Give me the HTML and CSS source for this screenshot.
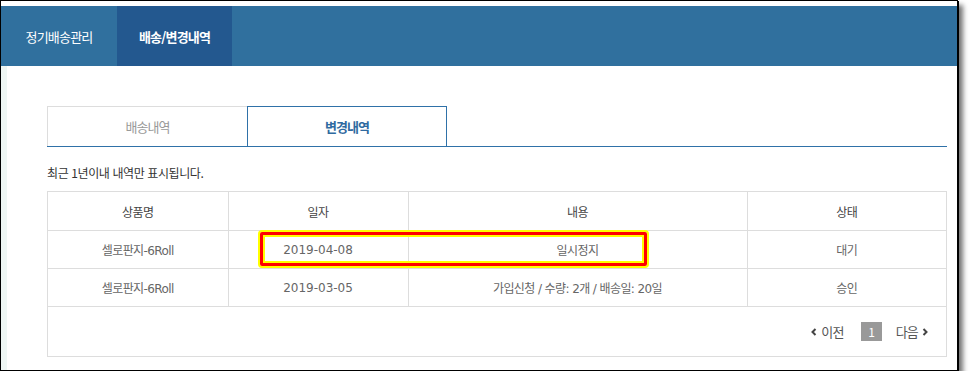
FILE: index.html
```html
<!DOCTYPE html>
<html lang="ko">

<head>
  <meta charset="UTF-8">
  <meta name="viewport" content="width=device-width, initial-scale=1.0">
  <title>배송/변경내역</title>
  <link rel="stylesheet" href="styles.css">
</head>

<body>
  <div class="frame">
    <nav class="gnb">
      <a class="gnb-item" href="#">정기배송관리</a>
      <a class="gnb-item on" href="#">배송/변경내역</a>
    </nav>

    <div class="container">
      <ul class="tabs">
        <li class="tab"><a href="#">배송내역</a></li>
        <li class="tab on"><a href="#">변경내역</a></li>
      </ul>

      <p class="notice">최근 1년이내 내역만 표시됩니다.</p>

      <div class="table-wrap">
        <table class="history">
          <colgroup>
            <col style="width: 180px">
            <col style="width: 180px">
            <col style="width: 339px">
            <col>
          </colgroup>
          <thead>
            <tr>
              <th>상품명</th>
              <th>일자</th>
              <th>내용</th>
              <th>상태</th>
            </tr>
          </thead>
          <tbody>
            <tr>
              <td>셀로판지-6Roll</td>
              <td class="date">2019-04-08</td>
              <td>일시정지</td>
              <td>대기</td>
            </tr>
            <tr>
              <td>셀로판지-6Roll</td>
              <td class="date">2019-03-05</td>
              <td>가입신청 / 수량: 2개 / 배송일: 20일</td>
              <td>승인</td>
            </tr>
          </tbody>
        </table>

        <div class="pager">
          <a class="prev" href="#">
            <svg width="6" height="8" viewBox="0 0 6 8"><polyline points="4.5,1 1.5,4 4.5,7" /></svg>
            이전
          </a>
          <span class="num">1</span>
          <a class="next" href="#">
            다음
            <svg width="6" height="8" viewBox="0 0 6 8"><polyline points="1.5,1 4.5,4 1.5,7" /></svg>
          </a>
        </div>

        <!-- annotation box drawn over the first row -->
        <div class="mark"></div>
      </div>
    </div>
  </div>
</body>

</html>
```

FILE: styles.css
```css
* {
  box-sizing: border-box;
}

body {
  margin: 0;
  background: #fff;
  font-family: "Noto Sans CJK KR", "Noto Sans", sans-serif;
  font-size: 12px;
  color: #555;
}

a {
  text-decoration: none;
  color: inherit;
}

.frame {
  width: 958px;
  height: 371px;
  border: 1px solid #000;
  padding-top: 5px;
  background: #fff;
  box-shadow: 1px 1px 0 #000, 5px 5px 5px rgba(0, 0, 0, 0.55);
}

.gnb {
  display: flex;
  height: 60px;
  background: #30709e;
}

.gnb-item {
  width: 116px;
  display: flex;
  align-items: center;
  justify-content: center;
  color: #fff;
  font-size: 13px;
  letter-spacing: -0.8px;
}

.gnb-item.on {
  width: 115px;
  background: #23588f;
  font-weight: bold;
}

.container {
  height: 304px;
  border-left: 6px solid #eef6f4;
  padding: 40px 10px 0 40px;
}

.tabs {
  display: flex;
  margin: 0;
  padding: 0;
  list-style: none;
  border-bottom: 1px solid #2f71a8;
}

.tab {
  width: 200px;
  height: 40px;
  border: 1px solid #ddd;
  border-bottom: 0;
  border-right: 0;
  display: flex;
  align-items: center;
  justify-content: center;
  font-size: 13px;
  color: #999;
  letter-spacing: -1px;
}

.tab.on {
  border: 1px solid #2f71a8;
  border-bottom: 0;
  color: #2f6aa0;
  font-weight: bold;
}

.notice {
  margin: 18px 0 10px;
  line-height: 16px;
  color: #333;
  letter-spacing: -0.4px;
}

.table-wrap {
  position: relative;
  width: 900px;
  border: 1px solid #ddd;
  border-top: 0;
}

.history {
  width: 100%;
  border-collapse: collapse;
  table-layout: fixed;
}

.history th,
.history td {
  height: 39px;
  border: 1px solid #ddd;
  text-align: center;
  font-weight: normal;
  padding: 0;
}

.history th {
  color: #444;
  letter-spacing: -0.6px;
}

.history td {
  font-family: "DejaVu Sans", "Noto Sans CJK KR", sans-serif;
  color: #666;
  letter-spacing: -0.6px;
}

.history td.date {
  letter-spacing: 0;
}

.history tr > :first-child {
  border-left: 0;
}

.history tr > :last-child {
  border-right: 0;
}

.history tbody td {
  height: 38px;
}

.pager {
  height: 49px;
  display: flex;
  align-items: center;
  justify-content: flex-end;
  padding-right: 18px;
  font-size: 13px;
  color: #555;
  letter-spacing: -0.8px;
}

.pager a {
  display: flex;
  align-items: center;
  gap: 4px;
}

.pager svg {
  fill: none;
  stroke: #444;
  stroke-width: 2;
}

.num {
  width: 21px;
  height: 19px;
  margin: 0 14px 0 17px;
  background: #999;
  color: #fff;
  font-size: 12px;
  display: flex;
  align-items: center;
  justify-content: center;
}

.mark {
  position: absolute;
  left: 212px;
  top: 41px;
  width: 387px;
  height: 34px;
  border: 3px solid #f00;
  border-radius: 2px;
  box-shadow: 0 0 0 2px #ff0, inset 0 0 0 2px #ff0;
  pointer-events: none;
}
```
